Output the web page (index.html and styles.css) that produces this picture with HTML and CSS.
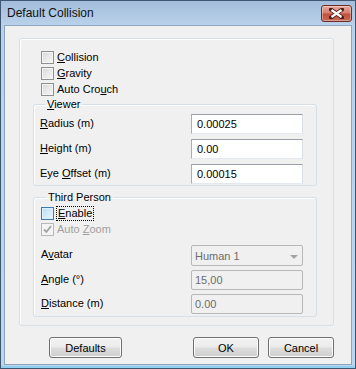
FILE: index.html
```html
<!DOCTYPE html>
<html lang="en">

<head>
    <meta charset="UTF-8">
    <title>Default Collision</title>
    <link rel="stylesheet" href="styles.css">
</head>

<body>
    <div class="window">
        <div class="titlebar">
            <span class="title">Default Collision</span>
            <div class="close">
                <svg width="15" height="11" viewBox="0 0 15 11">
                    <path d="M2 1.5 L13 9.5 M13 1.5 L2 9.5" stroke="#4a1f1a" stroke-width="4" stroke-linecap="square" />
                    <path d="M2.5 2 L12.5 9 M12.5 2 L2.5 9" stroke="#ffffff" stroke-width="2.2" />
                </svg>
            </div>
        </div>

        <div class="client">
            <div class="outer">
                <div class="checks">
                    <label class="check"><span class="box"></span><span><u>C</u>ollision</span></label>
                    <label class="check"><span class="box"></span><span><u>G</u>ravity</span></label>
                    <label class="check"><span class="box"></span><span>Auto Cro<u>u</u>ch</span></label>
                </div>

                <fieldset class="group viewer">
                    <legend><u>V</u>iewer</legend>
                    <div class="rows">
                        <span class="lbl"><u>R</u>adius (m)</span>
                        <span class="edit">0.00025</span>
                        <span class="lbl"><u>H</u>eight (m)</span>
                        <span class="edit">0.00</span>
                        <span class="lbl">Eye <u>O</u>ffset (m)</span>
                        <span class="edit">0.00015</span>
                    </div>
                </fieldset>

                <fieldset class="group third">
                    <legend>Third Person</legend>
                    <div class="checks small">
                        <label class="check"><span class="box hot"></span><span class="focus"><u>E</u>nable</span></label>
                        <label class="check off">
                            <span class="box">
                                <svg width="11" height="11" viewBox="0 0 11 11">
                                    <path d="M2 5.5 L4.5 8 L9 2" fill="none" stroke="#a2a2a2" stroke-width="1.8" />
                                </svg>
                            </span>
                            <span>Auto <u>Z</u>oom</span>
                        </label>
                    </div>
                    <div class="rows disabled">
                        <span class="lbl">A<u>v</u>atar</span>
                        <span class="edit combo">Human 1<i class="arrow"></i></span>
                        <span class="lbl"><u>A</u>ngle (°)</span>
                        <span class="edit">15,00</span>
                        <span class="lbl"><u>D</u>istance (m)</span>
                        <span class="edit">0.00</span>
                    </div>
                </fieldset>
            </div>

            <div class="buttons">
                <button class="btn defaults">Defaults</button>
                <button class="btn">OK</button>
                <button class="btn">Cancel</button>
            </div>
        </div>
    </div>
</body>

</html>
```

FILE: styles.css
```css
* {
    box-sizing: border-box;
}

body {
    margin: 0;
    font-family: "Liberation Sans", Arial, sans-serif;
    font-size: 11px;
    color: #000;
}

.window {
    width: 356px;
    height: 369px;
    display: flex;
    flex-direction: column;
    border: 1px solid #3f5670;
    padding: 0 3px 3px 3px;
    background: linear-gradient(#a3bddb, #b9d1ea 24px, #bdd5ee 100%);
    box-shadow: inset 0 -2px #8fd0ef;
}

/* title bar */
.titlebar {
    height: 24px;
    display: flex;
    justify-content: space-between;
    padding-left: 3px;
}

.title {
    font-size: 12px;
    line-height: 24px;
    color: #111;
}

.close {
    width: 31px;
    height: 17px;
    margin-top: 4px;
    border: 1px solid #6b2d26;
    border-radius: 3px;
    background: linear-gradient(#e8a99c, #d6806f 45%, #c2503c 55%, #c86a55);
    box-shadow: inset 0 0 0 1px rgba(255, 255, 255, 0.35);
    display: flex;
    align-items: center;
    justify-content: center;
}

/* client area */
.client {
    flex: 1;
    background: #f0f0f0;
    border: 1px solid #8aa3bf;
    border-top-color: #90a8c4;
    padding: 12px 0 0 14px;
}

.outer {
    width: 315px;
    border: 1px solid #d5dfe5;
    border-radius: 3px;
    box-shadow: inset 1px 1px #fff;
    padding: 12px 16px 8px 13px;
}

.checks {
    display: flex;
    flex-direction: column;
    gap: 3px;
    padding-left: 8px;
}

.check {
    display: flex;
    align-items: center;
    height: 13px;
    line-height: 13px;
}

.box {
    width: 13px;
    height: 13px;
    margin-right: 3px;
    border: 1px solid #8f8f8f;
    background: linear-gradient(135deg, #d9d9d9, #f7f7f7);
    box-shadow: inset 0 0 0 1px #f4f4f4;
    display: flex;
    align-items: center;
    justify-content: center;
}

.box.hot {
    border-color: #3d7bad;
    background: linear-gradient(135deg, #b9def5, #e9f6fd);
    box-shadow: inset 0 0 0 1px #def0fb;
}

.focus {
    outline: 1px dotted #000;
    outline-offset: 0;
    padding: 0 1px;
}

.off {
    color: #a0a0a0;
}

.off .box {
    border-color: #b8b8b8;
    background: #f4f4f4;
    box-shadow: none;
}

/* group boxes */
.group {
    width: 284px;
    margin: 0;
    border: 1px solid #d5dfe5;
    border-radius: 3px;
    box-shadow: inset 1px 1px #fff;
}

.group legend {
    padding: 0 2px;
    margin-left: 5px;
    line-height: 14px;
}

.viewer {
    margin-top: 1px;
    padding: 3px 13px 1px 6px;
}

.third {
    margin-top: 4px;
    padding: 3px 13px 2px 7px;
}

.third .checks {
    padding-left: 0;
}

.rows {
    display: grid;
    grid-template-columns: 1fr 112px;
    grid-auto-rows: 20px;
    row-gap: 5px;
    align-items: center;
}

.third .rows {
    margin-top: 9px;
    row-gap: 4px;
    grid-template-rows: 21px 20px 20px;
}

.lbl {
    margin-top: -3px;
}

.edit {
    height: 100%;
    border: 1px solid #abadb3;
    border-top-color: #9a9ea6;
    border-bottom-color: #e3e9ef;
    border-right-color: #dbdfe6;
    background: #fff;
    padding-left: 5px;
    display: flex;
    align-items: center;
}

.disabled .edit {
    border: 1px solid #b7b7b7;
    background: #f0f0f0;
    color: #6d6d6d;
    border-radius: 2px;
    padding-left: 3px;
}

.combo {
    position: relative;
}

.arrow {
    position: absolute;
    right: 4px;
    top: 9px;
    width: 0;
    height: 0;
    border-left: 4px solid transparent;
    border-right: 4px solid transparent;
    border-top: 4px solid #a3a3a3;
}

/* buttons */
.buttons {
    display: flex;
    gap: 9px;
    margin-top: 11px;
    padding: 0 17px 0 30px;
}

.btn {
    height: 21px;
    width: 66px;
    font-family: "Liberation Sans", Arial, sans-serif;
    font-size: 11px;
    color: #000;
    border: 1px solid #707070;
    border-radius: 3px;
    background: linear-gradient(#f2f2f2, #ebebeb 48%, #dddddd 52%, #cfcfcf);
    box-shadow: inset 0 0 0 1px #fcfcfc;
    padding: 0;
}

.defaults {
    width: 73px;
    margin-right: auto;
}
```
